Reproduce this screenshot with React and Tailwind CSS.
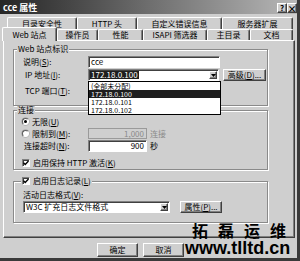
const raised = 'border border-t-white border-l-white border-r-[#404040] border-b-[#404040] shadow-[inset_-1px_-1px_0_#808080]';
const sunken = 'border border-t-[#808080] border-l-[#808080] border-r-white border-b-white shadow-[inset_1px_1px_0_#404040]';
const etched = 'border border-[#8a8a8a] shadow-[1px_1px_0_#ffffff,inset_1px_1px_0_#ffffff]';

function Arrow() {
  return (
    <div className={`w-[8px] h-full bg-[#cfcfcf] ${raised} flex items-center justify-center`}>
      <svg width="5" height="3" viewBox="0 0 5 3"><path d="M0 0h5L2.5 3z" fill="#000" /></svg>
    </div>
  );
}

function Check() {
  return (
    <div className={`w-[8px] h-[8px] bg-white ${sunken} flex items-center justify-center shrink-0`}>
      <svg width="6" height="6" viewBox="0 0 6 6"><path d="M0.5 2.8l1.7 1.7L5.5 1" stroke="#000" strokeWidth="1.3" fill="none" /></svg>
    </div>
  );
}

function Radio({ on }) {
  return (
    <div className="w-[7px] h-[7px] rounded-full bg-white border border-t-[#606060] border-l-[#606060] border-r-white border-b-white shadow-[0_0_0_0.5px_#999] flex items-center justify-center shrink-0">
      {on && <div className="w-[3px] h-[3px] rounded-full bg-black" />}
    </div>
  );
}

function Tab({ w, children, sel }) {
  return (
    <div
      className={`${w} ${sel ? 'h-[14px] -mb-px relative z-10 -ml-px' : 'h-full'} bg-[#cfcfcf] border-t border-l border-t-white border-l-white border-r border-r-[#404040] rounded-t-[2px] shadow-[inset_-1px_0_0_#808080] flex items-center justify-center whitespace-nowrap`}
    >
      {children}
    </div>
  );
}

function Btn({ w, children }) {
  return (
    <div className={`${w} h-full bg-[#cfcfcf] ${raised} flex items-center justify-center whitespace-nowrap`}>{children}</div>
  );
}

export default function App() {
  return (
    <div className="relative w-[300px] h-[261px] overflow-hidden bg-[#cfcfcf] font-['Noto_Sans_CJK_SC','Liberation_Sans',sans-serif] text-[8px] leading-none text-black border-r-[3px] border-b-[3px] border-r-[#3a3a3a] border-b-[#3a3a3a]">
      {/* title bar */}
      <div className="h-[14px] bg-gradient-to-r from-[#262626] via-[#6e6e6e] to-[#b8b8b8] flex items-center pl-[3px]">
        <span className="text-white font-bold text-[9px]">cce 属性</span>
        <div className="ml-auto flex h-[10px] mt-[2px]">
          <div className={`w-[10px] h-full bg-[#cfcfcf] ${raised} flex items-center justify-center font-bold text-[8px]`}>?</div>
          <div className={`w-[10px] h-full bg-[#cfcfcf] ${raised} flex items-center justify-center font-bold text-[9px]`}>×</div>
        </div>
      </div>

      {/* tabs */}
      <div className="mt-[3px] ml-[7px] h-[12px] flex">
        <Tab w="w-[70px]">目录安全性</Tab>
        <Tab w="w-[60px]">HTTP 头</Tab>
        <Tab w="w-[85px]">自定义错误信息</Tab>
        <Tab w="w-[71px]">服务器扩展</Tab>
      </div>
      <div className="ml-[3px] h-[11px] flex items-end">
        <Tab w="w-[55px]" sel>Web 站点</Tab>
        <Tab w="w-[41px]">操作员</Tab>
        <Tab w="w-[45px]">性能</Tab>
        <Tab w="w-[64px]">ISAPI 筛选器</Tab>
        <Tab w="w-[43px]">主目录</Tab>
        <Tab w="w-[43px]">文档</Tab>
      </div>

      {/* panel */}
      <div className={`ml-[3px] w-[292px] h-[198px] ${raised} pl-[9px] pt-[8px]`}>
        {/* group 1 */}
        <div className={`relative w-[255px] h-[57px] ${etched} pl-[9px] pt-[6px]`}>
          <span className="absolute -top-[5px] left-[3px] px-[1px] bg-[#cfcfcf]">Web 站点标识</span>
          <div className="flex items-center h-[12px]">
            <span className="w-[65px]">说明(<u>S</u>):</span>
            <div className={`w-[132px] h-full bg-white ${sunken} flex items-center pl-[2px]`}>cce</div>
          </div>
          <div className="flex items-center h-[12px] mt-[1px]">
            <span className="w-[65px] pl-[2px]">IP 地址(<u>I</u>):</span>
            <div className="relative w-[131px] h-full">
              <div className={`w-full h-full bg-white ${sunken} flex items-center pl-[1px] pr-px py-px`}>
                <span className="bg-[#1e1e1e] text-white px-[1px] h-[8px] flex items-center">172.18.0.100</span>
                <div className="ml-auto h-full"><Arrow /></div>
              </div>
              <div className="absolute left-0 top-[12px] w-[133px] h-[34px] bg-white border border-black z-20 flex flex-col text-[7px] leading-[8px]">
                <div className="h-[8px] pl-[2px]">(全部未分配)</div>
                <div className="h-[8px] pl-[2px] bg-[#1e1e1e] text-white">172.18.0.100</div>
                <div className="h-[8px] pl-[2px]">172.18.0.101</div>
                <div className="h-[8px] pl-[2px]">172.18.0.102</div>
              </div>
            </div>
            <div className="ml-[4px] h-[12px]"><Btn w="w-[43px]">高级(<u>D</u>)...</Btn></div>
          </div>
          <div className="flex items-center h-[12px] mt-[4px]">
            <span className="w-[65px] pl-[2px]">TCP 端口(<u>T</u>):</span>
            <div className={`w-[40px] h-full bg-white ${sunken}`} />
          </div>
        </div>

        {/* group 2 */}
        <div className={`relative mt-[4px] w-[255px] h-[60px] ${etched} pl-[8px] pt-[6px]`}>
          <span className="absolute -top-[5px] left-[3px] px-[1px] bg-[#cfcfcf]">连接</span>
          <div className="flex items-center h-[9px] gap-[3px]">
            <Radio on />
            <span>无限(<u>U</u>)</span>
          </div>
          <div className="flex items-center h-[11px] mt-[2px]">
            <div className="w-[66px] flex items-center gap-[3px]">
              <Radio />
              <span>限制到(<u>M</u>):</span>
            </div>
            <div className="w-[59px] h-full bg-[#cfcfcf] border border-[#9a9a9a] flex items-center justify-end pr-[2px] text-[#8a8a8a]">1,000</div>
            <span className="ml-[3px] text-[#8a8a8a]">连接</span>
          </div>
          <div className="flex items-center h-[12px] mt-[1px]">
            <span className="w-[66px] pl-[2px]">连接超时(<u>N</u>):</span>
            <div className={`w-[59px] h-full bg-white ${sunken} flex items-center justify-end pr-[2px]`}>900</div>
            <span className="ml-[3px]">秒</span>
          </div>
          <div className="flex items-center h-[9px] mt-[6px] gap-[3px]">
            <Check />
            <span>启用保持 HTTP 激活(<u>K</u>)</span>
          </div>
        </div>

        {/* group 3 */}
        <div className={`relative mt-[11px] w-[255px] h-[42px] ${etched} pl-[9px] pt-[8px]`}>
          <div className="absolute -top-[5px] left-[7px] px-[1px] bg-[#cfcfcf] flex items-center gap-[3px]">
            <Check />
            <span>启用日志记录(<u>L</u>)</span>
          </div>
          <div className="h-[9px] flex items-center">活动日志格式(<u>V</u>):</div>
          <div className="flex items-center h-[12px] mt-[2px]">
            <div className={`w-[147px] h-full bg-white ${sunken} flex items-center pl-[2px] py-px pr-px`}>
              <span>W3C 扩充日志文件格式</span>
              <div className="ml-auto h-full"><Arrow /></div>
            </div>
            <div className="ml-[10px] h-full"><Btn w="w-[42px]">属性(<u>P</u>)...</Btn></div>
          </div>
        </div>
      </div>

      {/* bottom buttons */}
      <div className="mt-[5px] pl-[97px] h-[14px] flex gap-[5px]">
        <Btn w="w-[41px]">确定</Btn>
        <Btn w="w-[41px]">取消</Btn>
      </div>

      {/* watermark */}
      <div className="absolute left-[192px] top-[223px] z-30 text-[16px] font-bold tracking-[10px] leading-[15px] text-black whitespace-nowrap">拓磊运维</div>
      <div className="absolute left-[185px] top-[240px] z-30 font-['Liberation_Sans',sans-serif] text-[18px] font-bold leading-[17px] text-black whitespace-nowrap">www.tlltd.cn</div>
    </div>
  );
}
